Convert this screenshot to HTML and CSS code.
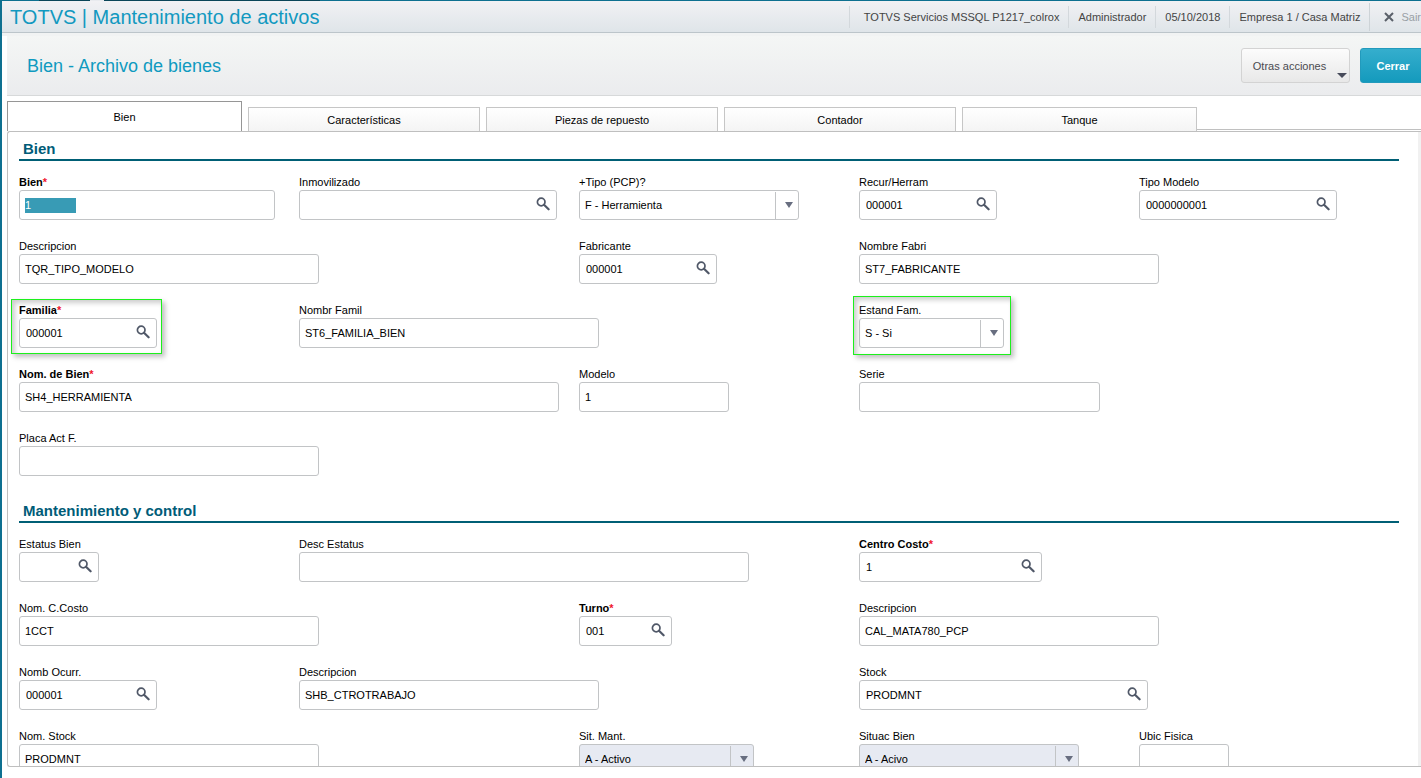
FILE: index.html
```html
<!DOCTYPE html>
<html lang="es">
<head>
<meta charset="utf-8">
<title>TOTVS | Mantenimiento de activos</title>
<link rel="stylesheet" href="styles.css">
</head>
<body>
<svg class="sprite" aria-hidden="true">
  <symbol id="lens" viewBox="0 0 14 14">
    <circle cx="5.2" cy="5" r="3.8" fill="none" stroke="currentColor" stroke-width="1.7"/>
    <path d="M8 7.8 12.6 12.3" fill="none" stroke="currentColor" stroke-width="2.2" stroke-linecap="round"/>
  </symbol>
</svg>
<div class="app">
  <header class="topbar">
    <h1 class="topbar-title">TOTVS | Mantenimiento de activos</h1>
    <div class="topbar-info">
      <span class="info-item info-first">TOTVS Servicios MSSQL P1217_colrox</span>
      <span class="info-item">Administrador</span>
      <span class="info-item">05/10/2018</span>
      <span class="info-item">Empresa 1 / Casa Matriz</span>
      <button class="exit" type="button"><svg class="exit-icon" viewBox="0 0 10 10" aria-hidden="true"><path d="M1 1 9 9M9 1 1 9" stroke="currentColor" stroke-width="2" fill="none"/></svg>Sair</button>
    </div>
  </header>
  <main class="main">
    <div class="band">
      <h2 class="band-title">Bien - Archivo de bienes</h2>
      <div class="actions">
        <button class="btn btn-other" type="button">Otras acciones</button>
        <button class="btn btn-close" type="button">Cerrar</button>
      </div>
    </div>
    <div class="tabs" role="tablist">
      <button class="tab tab-active" role="tab" aria-selected="true" type="button">Bien</button>
      <button class="tab" role="tab" type="button">Características</button>
      <button class="tab" role="tab" type="button">Piezas de repuesto</button>
      <button class="tab" role="tab" type="button">Contador</button>
      <button class="tab tab-last" role="tab" type="button">Tanque</button>
      <span class="tabs-rest"></span>
    </div>
    <div class="panel">
      <form class="form">
        <section class="section">
          <h3 class="section-title">Bien</h3>
          <div class="grid">
            <div class="field c1"><label class="label required" for="bien">Bien</label><input class="input w256 selected" id="bien" value="1"></div>
            <div class="field c2"><label class="label" for="inmov">Inmovilizado</label><span class="lookup w258"><input class="input" id="inmov"><button class="lens" type="button" aria-label="Buscar"><svg><use href="#lens"/></svg></button></span></div>
            <div class="field c3"><label class="label" for="tipo">+Tipo (PCP)?</label><span class="combo w220"><select class="select" id="tipo"><option>F - Herramienta</option></select></span></div>
            <div class="field c4"><label class="label" for="recur">Recur/Herram</label><span class="lookup w138"><input class="input" id="recur" value="000001"><button class="lens" type="button" aria-label="Buscar"><svg><use href="#lens"/></svg></button></span></div>
            <div class="field c5"><label class="label" for="tmodelo">Tipo Modelo</label><span class="lookup w198"><input class="input" id="tmodelo" value="0000000001"><button class="lens" type="button" aria-label="Buscar"><svg><use href="#lens"/></svg></button></span></div>

            <div class="field c1 span2"><label class="label" for="desc">Descripcion</label><input class="input w300" id="desc" value="TQR_TIPO_MODELO"></div>
            <div class="field c3"><label class="label" for="fabr">Fabricante</label><span class="lookup w138"><input class="input" id="fabr" value="000001"><button class="lens" type="button" aria-label="Buscar"><svg><use href="#lens"/></svg></button></span></div>
            <div class="field c4 span2"><label class="label" for="nfabr">Nombre Fabri</label><input class="input w300" id="nfabr" value="ST7_FABRICANTE"></div>

            <div class="field c1 marked marked-wide"><label class="label required" for="familia">Familia</label><span class="lookup w138"><input class="input" id="familia" value="000001"><button class="lens" type="button" aria-label="Buscar"><svg><use href="#lens"/></svg></button></span></div>
            <div class="field c2 span2"><label class="label" for="nfam">Nombr Famil</label><input class="input w300" id="nfam" value="ST6_FAMILIA_BIEN"></div>
            <div class="field c4 marked"><label class="label" for="estand">Estand Fam.</label><span class="combo w145"><select class="select" id="estand"><option>S - Si</option></select></span></div>

            <div class="field c1 span2"><label class="label required" for="nbien">Nom. de Bien</label><input class="input" id="nbien" value="SH4_HERRAMIENTA"></div>
            <div class="field c3"><label class="label" for="modelo">Modelo</label><input class="input w150" id="modelo" value="1"></div>
            <div class="field c4"><label class="label" for="serie">Serie</label><input class="input w241" id="serie"></div>

            <div class="field c1 span2"><label class="label" for="placa">Placa Act F.</label><input class="input w300" id="placa"></div>
          </div>
        </section>
        <section class="section">
          <h3 class="section-title">Mantenimiento y control</h3>
          <div class="grid">
            <div class="field c1"><label class="label" for="estatus">Estatus Bien</label><span class="lookup w80"><input class="input" id="estatus"><button class="lens" type="button" aria-label="Buscar"><svg><use href="#lens"/></svg></button></span></div>
            <div class="field c2 span2"><label class="label" for="destatus">Desc Estatus</label><input class="input w450" id="destatus"></div>
            <div class="field c4"><label class="label required" for="ccosto">Centro Costo</label><span class="lookup w183"><input class="input" id="ccosto" value="1"><button class="lens" type="button" aria-label="Buscar"><svg><use href="#lens"/></svg></button></span></div>

            <div class="field c1 span2"><label class="label" for="nccosto">Nom. C.Costo</label><input class="input w300" id="nccosto" value="1CCT"></div>
            <div class="field c3"><label class="label required" for="turno">Turno</label><span class="lookup w93"><input class="input" id="turno" value="001"><button class="lens" type="button" aria-label="Buscar"><svg><use href="#lens"/></svg></button></span></div>
            <div class="field c4 span2"><label class="label" for="dturno">Descripcion</label><input class="input w300" id="dturno" value="CAL_MATA780_PCP"></div>

            <div class="field c1"><label class="label" for="ocurr">Nomb Ocurr.</label><span class="lookup w138"><input class="input" id="ocurr" value="000001"><button class="lens" type="button" aria-label="Buscar"><svg><use href="#lens"/></svg></button></span></div>
            <div class="field c2 span2"><label class="label" for="docurr">Descripcion</label><input class="input w300" id="docurr" value="SHB_CTROTRABAJO"></div>
            <div class="field c4 span2"><label class="label" for="stock">Stock</label><span class="lookup w289"><input class="input" id="stock" value="PRODMNT"><button class="lens" type="button" aria-label="Buscar"><svg><use href="#lens"/></svg></button></span></div>

            <div class="field c1 span2"><label class="label" for="nstock">Nom. Stock</label><input class="input w300" id="nstock" value="PRODMNT"></div>
            <div class="field c3"><label class="label" for="sitm">Sit. Mant.</label><span class="combo combo-off w175"><select class="select" id="sitm"><option>A - Activo</option></select></span></div>
            <div class="field c4"><label class="label" for="sitb">Situac Bien</label><span class="combo combo-off w220"><select class="select" id="sitb"><option>A - Acivo</option></select></span></div>
            <div class="field c5"><label class="label" for="ubic">Ubic Fisica</label><input class="input w90" id="ubic"></div>
          </div>
        </section>
      </form>
      <div class="scroll-track"></div>
    </div>
  </main>
</div>
</body>
</html>
```
FILE: styles.css
```css
* { box-sizing: border-box; }

body {
  margin: 0;
  height: 100vh;
  overflow: hidden;
  background: #fff;
  color: #000;
  font-family: "Liberation Sans", Arial, sans-serif;
  font-size: 11px;
}

button, input, select { font: inherit; color: inherit; }
h1, h2, h3 { margin: 0; font-weight: normal; }
.sprite { display: none; }

/* The window runs slightly past the right edge of the viewport */
.app {
  display: flex;
  flex-direction: column;
  width: calc(100% + 12px);
  height: 100vh;
  padding-top: 1px;
  border-left: 2px solid #0e7090;
  background: linear-gradient(90deg, #0d7090 37px, #0a4558 37px 88px, #e8eaee 88px 102px, #0a4558 102px 318px, #0d7090 318px) top / 100% 1px no-repeat;
}

.topbar {
  display: flex;
  flex: none;
  align-items: center;
  justify-content: space-between;
  height: 32px;
  padding: 0 12px 0 8px;
  background: linear-gradient(#f1f1f4, #dfe5e9);
  border-bottom: 1px solid #bcc5ca;
}

.topbar-title { color: #1299c0; font-size: 20px; line-height: 30px; }

.topbar-info { display: flex; align-items: center; color: #444; }

.info-item {
  padding: 0 9px;
  line-height: 22px;
  border-left: 1px solid #d3d8dc;
  white-space: nowrap;
}
.info-first { padding-left: 14px; }

.exit {
  display: flex;
  align-items: center;
  gap: 7px;
  height: 28px;
  padding: 0 0 0 14px;
  border: 0;
  border-left: 1px solid #cdd3d7;
  background: none;
  color: #999fa5;
}
.exit-icon { width: 10px; height: 10px; color: #5a6069; }

.main {
  display: flex;
  flex: 1;
  flex-direction: column;
  min-height: 0;
  padding: 0 0 11px 5px;
  border-top: 3px solid #f1f3f3;
}

.band {
  display: flex;
  flex: none;
  align-items: center;
  justify-content: space-between;
  height: 60px;
  padding: 0 7px 0 20px;
  background: linear-gradient(#f4f6f5, #ebecee);
  border-bottom: 1px solid #d7d9da;
}

.band-title { color: #0f9ac0; font-size: 18px; line-height: 24px; }

.actions { display: flex; gap: 10px; }

.btn { height: 35px; padding: 0; border-radius: 3px; }

.btn-other {
  position: relative;
  width: 109px;
  padding-right: 12px;
  border: 1px solid #d3d3d3;
  background: linear-gradient(#fcfcfc, #e8e8e8);
  color: #4a4a50;
}
.btn-other::after {
  content: "";
  position: absolute;
  right: 2px;
  bottom: 4px;
  border: 5px solid transparent;
  border-top-color: #474b5a;
  border-bottom: 0;
}

.btn-close {
  width: 66px;
  border: 1px solid #229abc;
  background: linear-gradient(#35aecd, #149abd);
  color: #fff;
  font-weight: bold;
}

.tabs {
  display: flex;
  flex: none;
  align-items: flex-end;
  gap: 6px;
  height: 35px;
}

.tab {
  width: 232px;
  height: 24px;
  padding: 0;
  border: 1px solid #c6c6c6;
  border-bottom: 0;
  background: linear-gradient(#fff, #f4f4f4);
}
.tab-active {
  width: 235px;
  height: 30px;
  border-color: #969696;
  background: #fff;
}
.tab-last { width: 235px; }
.tabs-rest {
  flex: 1;
  height: 2px;
  margin-left: -6px;
  border-top: 1px solid #c0c0c0;
}

.panel {
  display: flex;
  flex: 1;
  min-height: 0;
  overflow: hidden;
  border: 1px solid #bfbfbf;
  border-right: 0;
  border-radius: 3px 0 0 3px;
}

.form { flex: 1; padding: 7px 19px 0 11px; }
.scroll-track { width: 15px; background: #f1f1f1; }

.section { margin-bottom: 25px; }

.section-title {
  margin-bottom: 13px;
  padding-left: 4px;
  border-bottom: 2px solid #005f75;
  color: #005c78;
  font-size: 15px;
  font-weight: bold;
  line-height: 20px;
}

.grid {
  display: grid;
  grid-template-columns: repeat(5, minmax(0, 1fr));
  gap: 18px 20px;
}

.c1 { grid-column-start: 1; }
.c2 { grid-column-start: 2; }
.c3 { grid-column-start: 3; }
.c4 { grid-column-start: 4; }
.c5 { grid-column-start: 5; }
.span2 { grid-column-end: span 2; }

.label { display: block; line-height: 16px; }
.required { font-weight: bold; }
.required::after { content: "*"; color: #f0142d; }

.input, .select {
  display: block;
  width: 100%;
  height: 30px;
  margin: 0;
  padding: 0 5px;
  border: 1px solid #c2c4c6;
  border-radius: 3px;
  background: #fff;
  outline: 0;
}

.selected {
  color: #fff;
  background: linear-gradient(#389bb5, #389bb5) 5px 7px / 51px 15px no-repeat #fff;
}

.lookup, .combo { display: block; position: relative; }
.lookup .input { padding: 0 32px 0 6px; }

.lens {
  position: absolute;
  top: 7px;
  right: 7px;
  width: 14px;
  height: 14px;
  padding: 0;
  border: 0;
  background: none;
  color: #505868;
}
.lens svg { display: block; width: 14px; height: 14px; }

.select { appearance: none; padding-right: 28px; }
.combo::before {
  content: "";
  position: absolute;
  top: 2px;
  right: 23px;
  bottom: 1px;
  border-left: 1px solid #c2c4c6;
}
.combo::after {
  content: "";
  position: absolute;
  top: 12px;
  right: 6px;
  border: 4px solid transparent;
  border-top: 6px solid #686e80;
  border-bottom: 0;
}
.combo-off .select { background: #e7eaf2; }

/* Green callout frame laid over a field */
.marked { position: relative; justify-self: start; }
.marked::after {
  content: "";
  position: absolute;
  inset: -6px -7px -7px -6px;
  border: 1px solid #1cf01c;
  box-shadow: 3px 3px 5px rgba(0, 0, 0, .25), inset 3px 3px 5px rgba(0, 0, 0, .2);
  pointer-events: none;
}
.marked-wide::after { inset: -3px -5px -6px -8px; }

.w80 { width: 80px; }
.w90 { width: 90px; }
.w93 { width: 93px; }
.w138 { width: 138px; }
.w145 { width: 145px; }
.w150 { width: 150px; }
.w175 { width: 175px; }
.w183 { width: 183px; }
.w198 { width: 198px; }
.w220 { width: 220px; }
.w241 { width: 241px; }
.w256 { width: 256px; }
.w258 { width: 258px; }
.w289 { width: 289px; }
.w300 { width: 300px; }
.w450 { width: 450px; }
```
